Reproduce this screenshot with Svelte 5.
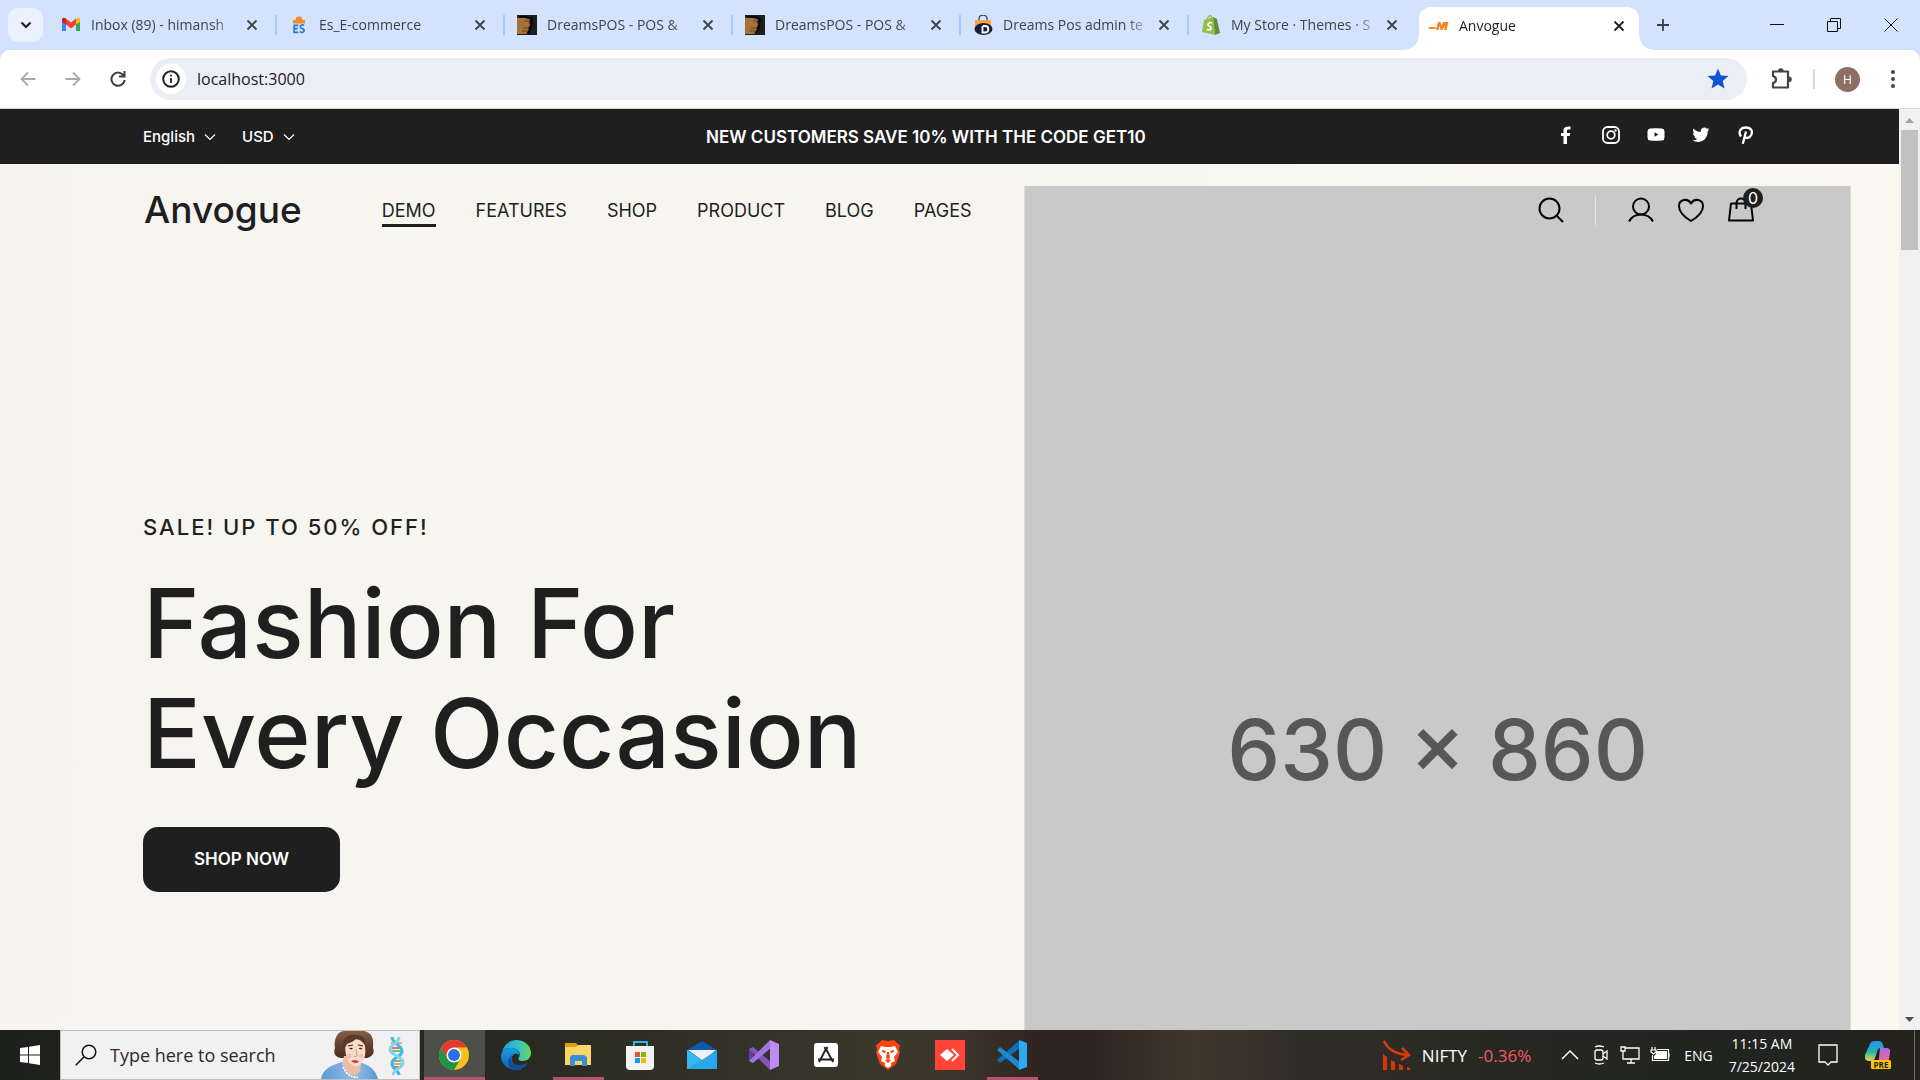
<script>
  const tabs = [
    { title: 'Inbox (89) - himansh', icon: 'gmail' },
    { title: 'Es_E-commerce', icon: 'es' },
    { title: 'DreamsPOS - POS &', icon: 'pos' },
    { title: 'DreamsPOS - POS &', icon: 'pos' },
    { title: 'Dreams Pos admin te', icon: 'dreams' },
    { title: 'My Store · Themes · S', icon: 'shopify' },
    { title: 'Anvogue', icon: 'anvogue', active: true }
  ];
  const nav = ['DEMO', 'FEATURES', 'SHOP', 'PRODUCT', 'BLOG', 'PAGES'];
  const apps = [
    { name: 'Chrome', icon: 'chrome', state: 'current' },
    { name: 'Edge', icon: 'edge' },
    { name: 'File Explorer', icon: 'folder', state: 'open' },
    { name: 'Store', icon: 'store' },
    { name: 'Mail', icon: 'mail' },
    { name: 'Visual Studio', icon: 'vs' },
    { name: 'App', icon: 'compass' },
    { name: 'Brave', icon: 'brave' },
    { name: 'AnyDesk', icon: 'anydesk' },
    { name: 'VS Code', icon: 'code', state: 'stacked' }
  ];
</script>

{#snippet favicon(kind)}
  {#if kind === 'gmail'}
    <svg class="fav" viewBox="0 0 20 20"><path fill="#4285f4" d="M1 6v10h4V9z"/><path fill="#34a853" d="M19 6v10h-4V9z"/><path fill="#c5221f" d="M1 4.500c0-2 2-2.500 4-1v6L1 7z"/><path fill="#fbbc04" d="M19 4.500c0-2-2-2.500-4-1v6l4-2.500z"/><path fill="#ea4335" d="M5 3.500 10 7.500l5-4v6l-5 4-5-4z"/></svg>
  {:else if kind === 'es'}
    <svg class="fav" viewBox="0 0 20 20"><path fill="#f58b2a" d="M4 8.500V5h2.500a3.500 3.500 0 0 1 7 0H16v3.500z"/><path fill="none" stroke="#2878c8" stroke-width="1.700" d="M9.300 10.300H5.200v7h4.100M5.200 13.700h3.500M15 10.500c-1-1-3.800-.8-3.800 1.300 0 2.400 4 1.200 4 3.700 0 2.300-3.400 2.200-4.500 1"/></svg>
  {:else if kind === 'pos'}
    <svg class="fav" viewBox="0 0 20 20"><path fill="#1d1f1d" d="M0 0h20v20H0z"/><path fill="#a9713a" d="M0 3c5-1 9 0 13 1l-1 3 1 3-2 3 1 2-3 4H0z"/><path stroke="#6b431f" d="M5 16h6M6 13h5M8 6h4" fill="none"/><path fill="none" stroke="#070707" stroke-width="2" d="M2 2c5-1 9 0 13 2l-1 9-3 5"/></svg>
  {:else if kind === 'dreams'}
    <svg class="fav" viewBox="0 0 20 20"><path fill="none" stroke="#33435f" stroke-width="1.300" d="M6 6V3.500a4 3.500 0 0 1 8 0V6"/><path fill="#ff9f43" d="M2 5h16v12H2z"/><ellipse cx="10.500" cy="14" rx="9" ry="6" fill="#14213d"/><path fill="none" stroke="#fff" stroke-width="1.800" d="M9.500 11v6.500H12c4.500 0 4.500-6.500 0-6.500h-2"/></svg>
  {:else if kind === 'shopify'}
    <svg class="fav" viewBox="0 0 20 20"><path fill="#95bf47" d="m3 5 9-3 2 18L1 17z"/><path fill="#5e8e3e" d="m12 2 4 2 3 14-5 2z"/><path fill="none" stroke="#95bf47" stroke-width="1.200" d="M6 5c0-3 3-5 4-4s1 2 1 4"/><path fill="none" stroke="#fff" stroke-width="1.800" d="M11 8c-2-1-4 0-4 1.500 0 2 3 1.500 3 3.800 0 2-2.500 2-4 1"/></svg>
  {:else}
    <svg class="fav" viewBox="0 0 20 20"><path fill="#f5811f" d="M0 11h7l-1 2H0zM9 6h2.500l.7 3.500L14.500 6h5l-2 8H15l1.200-4.500-3 4.500h-1.700l-.8-4.500L9.500 14H7z"/></svg>
  {/if}
{/snippet}

{#snippet closeMark()}
  <svg width="12" height="12" viewBox="0 0 12 12"><path d="m1.500 1.500 9 9m0-9-9 9" fill="none" stroke="currentColor" stroke-width="1.800"/></svg>
{/snippet}

{#snippet appIcon(kind)}
  {#if kind === 'chrome'}
    <svg viewBox="0 0 30 30"><circle cx="15" cy="15" r="15" fill="#fbc116"/><path fill="#e33b2e" d="M2 7.500A15 15 0 0 1 28 7.500H15L8 18z"/><path fill="#229342" d="M2 7.500A15 15 0 0 0 15 30l6.500-11.200L8.500 18.800z"/><circle cx="15" cy="15" r="7.500" fill="#fff"/><circle cx="15" cy="15" r="6" fill="#2a6ee8"/></svg>
  {:else if kind === 'edge'}
    <svg viewBox="0 0 30 30"><defs><linearGradient id="edgeTop"><stop stop-color="#249fd8"/><stop offset=".55" stop-color="#35c1c6"/><stop offset="1" stop-color="#66dd55"/></linearGradient><linearGradient id="edgeSide" x2="0" y2="1"><stop stop-color="#1b9de2"/><stop offset="1" stop-color="#0d5fb4"/></linearGradient></defs><path fill="url(#edgeTop)" d="M1 12C3 4 9 0 15 0c9 0 15 6 15 13 0 5-4 8-8 8-3 0-6-1-4-4 3-5-3-9-8-9-4 0-7 1-9 4z"/><path fill="url(#edgeSide)" d="M0 16C1 10 5 8 10 8c5 0 9 3 8 7-4-3-8 0-7 5 1 6 6 9 11 9-11 4-22-3-22-13z"/><path fill="#124e98" d="M11 15c-3 7 2 13 16 8-3 6-11 8-16 6-5-3-5-10 0-14z"/></svg>
  {:else if kind === 'folder'}
    <svg viewBox="0 0 30 30"><path fill="#df9c0b" d="M2 3h11l2 2-2 4H2z"/><path fill="#ffd567" d="M2 7h11l2-2h13v20H2z"/><path fill="#3a8fd2" d="M7 26V17l2-2h12l3 2v9h-5v-5h-7v5z"/></svg>
  {:else if kind === 'store'}
    <svg viewBox="0 0 30 30"><path fill="none" stroke="#2bb4ec" stroke-width="2" d="M9 7V2h13v5"/><path fill="#f3f3f5" d="M1 6h28v20q0 4-4 4H5q-4 0-4-4z"/><path fill="#f25022" d="M10 12h5v5h-5z"/><path fill="#7fba00" d="M16 12h5v5h-5z"/><path fill="#00a4ef" d="M10 18h5v5h-5z"/><path fill="#ffb900" d="M16 18h5v5h-5z"/></svg>
  {:else if kind === 'mail'}
    <svg viewBox="0 0 30 30"><path fill="#0b5ba8" d="m0 10 15-9 15 9-15 10z"/><path fill="#f1f1f3" d="M1 10h28L16 21z"/><path fill="#28a8ea" d="m0 10 15 10 15-10v19H0z"/><path fill="#50d9ff" d="M30 10 0 29V10l15 10z" opacity=".35"/></svg>
  {:else if kind === 'vs'}
    <svg viewBox="0 0 30 30"><path fill="#6a3aa5" d="m0 9 4-2v16l-4-2z"/><path fill="#8552c0" d="m0 9 4-2 19 16-2 7z"/><path fill="#a175df" d="m0 21 4 2L23 7l-2-7z"/><path fill="#bf8bf5" d="m21 0 9 4v22l-9 4z"/></svg>
  {:else if kind === 'compass'}
    <svg viewBox="0 0 30 30"><rect x="3" y="3" width="24" height="24" rx="3" fill="#fff"/><path fill="none" stroke="#222" stroke-width="1.900" d="m15.500 8-7.500 14M14.500 8 22 22M7 19.500h16M13.500 7l1.500 3 1.500-3"/></svg>
  {:else if kind === 'brave'}
    <svg viewBox="0 0 30 30"><path fill="#fb4412" d="m9 0 6 1 6-1 3 3 3 2-1 5 1 3-4 11-8 6-8-6-4-11 1-3-1-5 3-2z"/><path fill="#fff" d="m8 6 4 1h6l4-1 3 6-4 5 1 4-4 2v3l-3 2-3-2v-3l-4-2 1-4-4-5z"/><path fill="#fb4412" d="m9 10 4 1-1 2-3-1zm12 0-4 1 1 2 3-1zM14 12h2l1 6-2 1-2-1zm-2 8 3-1 3 1-3 3z"/></svg>
  {:else if kind === 'anydesk'}
    <svg viewBox="0 0 30 30"><path fill="#ff4438" d="M0 0h30v30H0z"/><path fill="#fff" d="m5 15 7-6 7 6-7 6z"/><path fill="none" stroke="#fff" stroke-width="2" d="m17 9 6 6-6 6"/></svg>
  {:else}
    <svg viewBox="0 0 30 30"><path fill="#0b71b7" d="m0 20 3 3L23 8V0z"/><path fill="#168bd4" d="m0 10 3-3 20 15v8z"/><path fill="#2aabf2" d="m22 0 8 3v24l-8 3z"/></svg>
  {/if}
{/snippet}

<div class="desktop">
  <div class="tabstrip">
    <button class="tabsearch" aria-label="Search tabs"><svg width="12" height="8" viewBox="0 0 12 8"><path d="m1.500 1.500 4.500 4.500 4.500-4.500" fill="none" stroke="#1f1f1f" stroke-width="2.200"/></svg></button>
    {#each tabs as tab}
      <div class="tab" class:active={tab.active}>
        {@render favicon(tab.icon)}
        <span class="title">{tab.title}</span>
        <button class="plain" aria-label="Close tab">{@render closeMark()}</button>
      </div>
    {/each}
    <button class="plain newtab" aria-label="New tab"><svg width="14" height="14" viewBox="0 0 14 14"><path d="M7 1v12M1 7h12" stroke="#3c4043" stroke-width="1.800"/></svg></button>
    <div class="window">
      <button class="plain" aria-label="Minimize"><svg width="14" height="14" viewBox="0 0 14 14"><path d="M0 6.500h14" stroke="#111"/></svg></button>
      <button class="plain" aria-label="Restore"><svg width="14" height="14" viewBox="0 0 14 14"><path d="M.5 3.500h10v10H.5zM3.500 3.500v-3h10v10h-3" fill="none" stroke="#111"/></svg></button>
      <button class="plain" aria-label="Close"><svg width="14" height="14" viewBox="0 0 14 14"><path d="m.5.5 13 13m0-13-13 13" fill="none" stroke="#111"/></svg></button>
    </div>
  </div>

  <div class="toolbar">
    <div class="history">
      <button class="plain" aria-label="Back"><svg width="16" height="16" viewBox="0 0 16 16"><path d="M15.500 8H1.500M8 1.500 1.500 8 8 14.500" fill="none" stroke="#a9a9ab" stroke-width="1.800"/></svg></button>
      <button class="plain" aria-label="Forward"><svg width="16" height="16" viewBox="0 0 16 16"><path d="M.5 8h14M8 1.500 14.500 8 8 14.500" fill="none" stroke="#a9a9ab" stroke-width="1.800"/></svg></button>
      <button class="plain" aria-label="Reload"><svg width="16" height="16" viewBox="0 0 16 16"><path d="M13.500 4.500A6.600 6.600 0 1 0 14.600 9M14.500 0v5.500H9" fill="none" stroke="#3c4043" stroke-width="2"/></svg></button>
    </div>
    <div class="omnibox">
      <span class="info"><svg width="18" height="18" viewBox="0 0 18 18"><circle cx="9" cy="9" r="7.800" fill="none" stroke="#222" stroke-width="2"/><path d="M9 8v5M9 4.800v1.800" stroke="#222" stroke-width="1.800"/></svg></span>
      <input aria-label="Address" value="localhost:3000" />
      <button class="plain" aria-label="Bookmark"><svg width="22" height="22" viewBox="0 0 22 22"><path fill="#0b57d0" d="m11 .5 2.900 7 7.600.6-5.800 4.900 1.800 7.500-6.500-4-6.500 4L6.300 13 .5 8.100l7.600-.6z"/></svg></button>
    </div>
    <button class="plain ext" aria-label="Extensions"><svg width="24" height="24" viewBox="0 0 24 24"><path fill="none" stroke="#444" stroke-width="2.200" stroke-linejoin="round" d="M3 4.500h15v16H3v-4.500c4-1 4-6 0-7z"/><path fill="#444" d="M8 4a2.800 2.800 0 0 1 5.600 0zM19 9.500a2.800 2.800 0 0 1 0 5.600z"/></svg></button>
    <span class="rule"></span>
    <button class="avatar">H</button>
    <button class="plain dots" aria-label="Menu"><svg width="4" height="18" viewBox="0 0 4 18"><g fill="#444"><circle cx="2" cy="2" r="2"/><circle cx="2" cy="9" r="2"/><circle cx="2" cy="16" r="2"/></g></svg></button>
  </div>

  <div class="viewport">
    <main>
      <div class="topbar">
        <div class="locale">
          <button>English <svg width="12" height="8" viewBox="0 0 12 8"><path d="m1 1.500 5 5 5-5" fill="none" stroke="#fff" stroke-width="1.200"/></svg></button>
          <button>USD <svg width="12" height="8" viewBox="0 0 12 8"><path d="m1 1.500 5 5 5-5" fill="none" stroke="#fff" stroke-width="1.200"/></svg></button>
        </div>
        <strong>NEW CUSTOMERS SAVE 10% WITH THE CODE GET10</strong>
        <div class="social">
          <a href="#facebook" aria-label="Facebook"><svg viewBox="0 0 18 18"><path fill="#fff" d="M6.500 18v-8H4V7h2.500V4.500C6.500 1.500 8 .5 13.500.5v3h-2C10 3.500 10 4 10 7h3.300l-.6 3H10v8z"/></svg></a>
          <a href="#instagram" aria-label="Instagram"><svg viewBox="0 0 18 18"><g fill="none" stroke="#fff" stroke-width="1.800"><rect x="1" y="1" width="16" height="16" rx="4.500"/><circle cx="9" cy="9" r="3.800"/></g><circle cx="13.500" cy="4.500" r="1.200" fill="#fff"/></svg></a>
          <a href="#youtube" aria-label="YouTube"><svg viewBox="0 0 18 18"><path fill="#fff" fill-rule="evenodd" d="M3 2.500q6-.6 12 0 2.500.3 2.500 3v6q0 2.700-2.500 3-6 .6-12 0-2.500-.3-2.500-3v-6q0-2.700 2.500-3zM7.500 6.200v4.600l4-2.300z"/></svg></a>
          <a href="#twitter" aria-label="Twitter"><svg viewBox="0 0 18 18"><path fill="#fff" d="M17.500 3.400q-1 .4-2 .5 1-.7 1.500-1.900-1 .6-2.200.8a3.500 3.500 0 0 0-6 3.200Q4.300 5.900 1.500 2.600C.5 4.300 1 6.200 2.600 7.300L1 6.900c0 1.700 1 3 2.800 3.400l-1.500.1c.5 1.300 1.700 2.300 3.300 2.400A7 7 0 0 1 .5 14.300c7 4.200 15.300-.2 15.200-9q1-.7 1.800-1.900z"/></svg></a>
          <a href="#pinterest" aria-label="Pinterest"><svg viewBox="0 0 18 18"><path fill="none" stroke="#fff" stroke-width="2.300" d="M4 10.500C.8 6 3.500 1.500 8.800 1.500c5.500 0 7.200 4 5.400 7.500-1.600 3.300-5 3.700-6.700 1.800M9 5.500 5.800 17.800"/></svg></a>
        </div>
      </div>

      <section class="hero">
        <header>
          <a class="brand" href="#home">Anvogue</a>
          <nav>
            {#each nav as item, i}
              <a href="#{item.toLowerCase()}" class:selected={i === 0}>{item}</a>
            {/each}
          </nav>
          <div class="actions">
            <button class="plain" aria-label="Search"><svg width="26" height="26" viewBox="0 0 26 26"><circle cx="11.500" cy="11.500" r="10" fill="none" stroke="#050505" stroke-width="2"/><path d="m18.500 18.500 6.500 6.500" stroke="#050505" stroke-width="2"/></svg></button>
            <span class="bar"></span>
            <button class="plain" aria-label="Account"><svg width="26" height="26" viewBox="0 0 26 26"><g fill="none" stroke="#050505" stroke-width="2"><circle cx="13" cy="9.500" r="8"/><path d="M1 24.500c5-9.300 19-9.300 24 0"/></g></svg></button>
            <button class="plain" aria-label="Wishlist"><svg width="26" height="26" viewBox="0 0 26 26"><path fill="none" stroke="#050505" stroke-width="2" stroke-linejoin="round" d="M13 24C7 20.500 1 15 1 9c0-6.500 8.500-8.500 12-2.500C16.500.5 25 2.500 25 9c0 6-6 11.500-12 15z"/></svg></button>
            <button class="plain bag" aria-label="Cart"><svg width="26" height="26" viewBox="0 0 26 26"><path fill="none" stroke="#050505" stroke-width="2" stroke-linejoin="round" d="M3 6.500h20L25 23.500H1zM8.500 12V6c0-6 9-6 9 0v6"/></svg><span class="badge">0</span></button>
          </div>
        </header>
        <div class="slide">
          <div class="copy">
            <p>SALE! UP TO 50% OFF!</p>
            <h1>Fashion For<br />Every Occasion</h1>
            <a class="shop" href="#shop-now">SHOP NOW</a>
          </div>
          <div class="photo">630 × 860</div>
        </div>
      </section>
    </main>
    <div class="scroll">
      <svg width="9" height="5" viewBox="0 0 9 5"><path fill="#a3a3a3" d="m0 5 4.500-5L9 5z"/></svg>
      <span class="thumb"></span>
      <svg class="down" width="9" height="5" viewBox="0 0 9 5"><path fill="#505050" d="m0 0 4.500 5L9 0z"/></svg>
    </div>
  </div>

  <footer>
    <button class="start plain" aria-label="Start"><svg width="20" height="20" viewBox="0 0 20 20"><path fill="#fff" d="m0 3 8-1v7.500H0zm9-1.200L20 0v9.500H9zM0 10.500h8V18l-8-1zm9 0h11V20L9 18.200z"/></svg></button>
    <label class="search">
      <svg width="22" height="22" viewBox="0 0 22 22"><circle cx="14" cy="8" r="6.800" fill="none" stroke="#111" stroke-width="1.500"/><path d="m9.200 12.800-8.500 8.500" stroke="#111" stroke-width="1.500"/></svg>
      <input placeholder="Type here to search" />
      <svg class="art" width="90" height="48" viewBox="0 0 90 48">
        <defs>
          <linearGradient id="shirt"><stop stop-color="#5f98d5"/><stop offset=".6" stop-color="#93bfea"/><stop offset="1" stop-color="#5b94d2"/></linearGradient>
          <linearGradient id="hair" x2="0" y2="1"><stop stop-color="#8a624a"/><stop offset=".5" stop-color="#67432f"/><stop offset="1" stop-color="#4a2c1e"/></linearGradient>
        </defs>
        <path fill="url(#shirt)" d="M0 48c1-9 10-14 21-17h18c9 3 16 8 18 17z"/>
        <path fill="url(#hair)" d="M17 3C22-3 45-3 50 4c3 5 2 9 2 13 2 5-1 9-6 10H22c-8 0-10-5-8-10-1-5 0-10 3-14z"/>
        <path fill="#eabfa5" d="M23 25h18l-2 15c-4 7-13 5-18-7z"/>
        <path fill="#f8dbc9" d="M25 11c5-4 13-4 18 0 2 7 2 14-1 19-3 6-8 7-12 3-5-5-7-14-5-22z"/>
        <path fill="#5a3a29" d="M22 15c0-9 6-12 13-11 7 0 10 4 9 10-3-4-6-6-9-6-3 3-7 4-9 5-1 3-2 4-4 2z"/>
        <path fill="none" stroke="#3a241a" stroke-width="1.200" d="m27 15 5-1m5 0 5 1"/>
        <path fill="#2f1d16" d="M28 17.500q2-1.500 4 .2-2 1.300-4-.2zm9.500 0q2-1.500 4 .2-2 1.300-4-.2z"/>
        <path fill="none" stroke="#d59a80" d="m35 18 1 7-3 .5"/>
        <path fill="#c0463f" d="M30 30q4-2 8 .5-4 3.500-8-.5z"/>
        <circle cx="28" cy="25" r="2.500" fill="#f0b3a3" opacity=".7"/><circle cx="40" cy="25" r="2" fill="#f0b3a3" opacity=".7"/>
        <path fill="none" stroke="#fff" stroke-width="1.600" stroke-dasharray="2 1" d="M22 36c3 7 9 11 15 10"/>
        <path stroke="#e89338" stroke-width="1.500" d="M70 12h11M71 33h10"/><path stroke="#d94343" stroke-width="1.500" d="M69 17h10M72 36h8"/><path stroke="#4aab55" stroke-width="1.500" d="M70 20h10M71 30h12"/>
        <path fill="none" stroke="#42b7df" stroke-width="3" d="M71 6c0 7 11 8 10 15-2 7-11 5-10 12 0 5 7 6 7 11"/><path fill="none" stroke="#85d4ee" stroke-width="3" d="M78 6c0 7-9 6-9 13 2 6 13 6 13 13-1 6-9 5-10 12"/>
      </svg>
    </label>
    <div class="apps">
      {#each apps as app}<button class="app {app.state ?? ''}" aria-label={app.name}>{@render appIcon(app.icon)}</button>{/each}
    </div>
    <div class="tray">
      <svg class="chart" width="29" height="32" viewBox="0 0 29 32"><path fill="none" stroke="#dc3b0b" stroke-width="2.500" d="M2 2c4 9 12 13 24 14M20 9l7 7-8 5"/><path fill="#d6380c" d="M1 15l4 3v13H1zM9 21l4 2v8H9zM17 25l4 2v4h-4zM25 28l3 1v2h-3z"/></svg>
      <span class="nifty">NIFTY</span><span class="loss">-0.36%</span>
      <svg class="up" width="18" height="10" viewBox="0 0 18 10"><path fill="none" stroke="#fff" stroke-width="1.500" d="m1 9 8-8 8 8"/></svg>
      <svg class="meet" width="20" height="20" viewBox="0 0 20 20"><g fill="none" stroke="#fff" stroke-width="1.300"><rect x="4" y="5" width="8" height="10" rx="2"/><path d="m12 9 4-3v8l-4-3M4 2q4-2 9 0M4 18q4 2 9 0"/></g></svg>
      <svg class="net" width="20" height="20" viewBox="0 0 20 20"><path fill="none" stroke="#fff" stroke-width="1.300" d="M5 3h14v11H3V7M11 14v4M7 18h8M1 2h4v4H1zM3 6v4"/></svg>
      <svg class="power" width="20" height="20" viewBox="0 0 20 20"><path fill="#fff" d="M6 6h11v8H4v-3l2-2z"/><path fill="none" stroke="#fff" stroke-width="1.200" d="M7 4.500h11.500v11h-16V10M19 8v4M2 2v3M5 2v3M1 5h5v2L3.500 9 1 7z"/></svg>
      <span class="lang">ENG</span>
      <span class="clock">11:15 AM<br />7/25/2024</span>
      <svg class="note" width="20" height="22" viewBox="0 0 20 22"><path fill="none" stroke="#fff" stroke-width="1.300" d="M1 1h18v17h-6l-3 3-3-3H1z"/></svg>
      <svg class="copilot" width="26" height="28" viewBox="0 0 26 28"><defs><linearGradient id="cpA" x2="0" y2="1"><stop stop-color="#2d8cf0"/><stop offset=".5" stop-color="#18b5b8"/><stop offset="1" stop-color="#e8d33f"/></linearGradient><linearGradient id="cpB" x2="0" y2="1"><stop stop-color="#a96bed"/><stop offset="1" stop-color="#f2668b"/></linearGradient></defs><path fill="url(#cpA)" d="M5 3q1-3 5-3h4q3 0 4 4l1 3h-4q-2 0-3 4l-2 6q-1 3-4 3H4q-5 0-4-6z"/><path fill="url(#cpB)" d="M15 7h6q5 0 4 5l-1 6q-1 3-4 3h-9q3-1 3-4z"/><rect x="6" y="19" width="20" height="9" rx="1.500" fill="#ffc400"/><text x="16" y="26.500" text-anchor="middle" font-size="8" font-weight="700" fill="#222">PRE</text></svg>
      <span class="peek"></span>
    </div>
  </footer>
</div>

<style>
  :global(body) { margin: 0; }
  .desktop { height: 100vh; display: flex; flex-direction: column; overflow: hidden; background: #d3e3fd; font-family: "Open Sans", "Noto Sans", sans-serif; }
  button, input { font: inherit; color: inherit; border: 0; background: none; padding: 0; outline: 0; }
  a { color: inherit; text-decoration: none; }
  svg { display: block; flex: none; }
  .plain { display: grid; place-items: center; flex: none; }

  .tabstrip { height: 50px; flex: none; display: flex; align-items: center; padding-left: 8px; color: #3f4347; font-size: 14px; }
  .tabsearch { width: 35px; height: 34px; margin-right: 6px; border-radius: 10px; background: #ebf1fd; display: grid; place-items: center; }
  .tab { width: 228px; height: 20px; box-sizing: border-box; display: flex; align-items: center; gap: 10px; padding: 0 17px 0 12px; border-right: 2px solid #a8c7fa; }
  .tab:nth-child(7) { border-color: transparent; }
  .tab.active { position: relative; align-self: flex-end; width: 220px; height: 43px; margin-left: 2px; padding: 0 14px 6px 10px; border: 0; border-radius: 12px 12px 0 0; background: #fff; color: #1f1f1f; }
  .tab.active::before, .tab.active::after { content: ""; position: absolute; bottom: 0; width: 14px; height: 14px; }
  .tab.active::before { left: -14px; background: radial-gradient(circle at 0 0, transparent 13px, #fff 14px); }
  .tab.active::after { right: -14px; background: radial-gradient(circle at 100% 0, transparent 13px, #fff 14px); }
  .fav { width: 20px; height: 20px; }
  .title { flex: 1; line-height: 24px; white-space: nowrap; mask-image: linear-gradient(to right, #000 84%, transparent 104%); }
  .newtab { margin-left: 17px; }
  .window { margin-left: auto; display: flex; gap: 43px; padding-right: 22px; }

  .toolbar { height: 59px; box-sizing: border-box; flex: none; display: flex; align-items: center; background: #fff; border-radius: 10px 10px 0 0; border-bottom: 1px solid #d8d8d8; padding: 0 25px 0 20px; }
  .history { display: flex; gap: 29px; margin-right: 24px; }
  .omnibox { flex: 1; height: 42px; border-radius: 21px; background: #ebeef7; display: flex; align-items: center; padding: 0 18px 0 6px; color: #202124; font-size: 16px; }
  .info { width: 30px; height: 30px; border-radius: 50%; background: #fff; display: grid; place-items: center; }
  .omnibox input { flex: 1; margin-left: 11px; }
  .ext { margin-left: 23px; }
  .rule { width: 2px; height: 20px; background: #c9dcfb; margin: 0 20px 0 19px; }
  .avatar { width: 25px; height: 25px; border-radius: 50%; background: #8d6e63; color: #fff; font-size: 12px; }
  .dots { margin-left: 31px; }

  .viewport { flex: 1; min-height: 0; display: flex; }
  main { flex: 1; min-width: 0; display: flex; flex-direction: column; font-family: Inter, "Liberation Sans", sans-serif; color: #1f1f1f; }
  .topbar { height: 55px; flex: none; display: flex; align-items: center; justify-content: space-between; padding: 0 144px 0 143px; background: #1f1f1f; color: #fff; }
  .topbar strong { font-size: 17px; font-weight: 600; line-height: 24px; }
  .locale { display: flex; gap: 26px; }
  .locale button { display: flex; align-items: center; gap: 9px; font-size: 15px; line-height: 20px; font-weight: 500; }
  .social { display: flex; gap: 27px; padding-bottom: 4px; }
  .social svg { width: 18px; height: 18px; }

  .hero { flex: 1; min-height: 0; display: grid; background: linear-gradient(90deg, #f7f4ef, #f6f5f0 20%, #f7f5f0 50%, #fbf8f1); }
  header, .slide { grid-area: 1 / 1; min-height: 0; }
  header { z-index: 1; align-self: start; height: 92px; display: flex; align-items: center; padding: 0 145px 0 144px; }
  .brand { font-size: 37px; font-weight: 500; line-height: 44px; }
  nav { display: flex; gap: 40px; margin-left: 80px; font-size: 18px; font-weight: 400; }
  nav a { padding: 4px 0 2px; border-bottom: 3px solid transparent; line-height: 22px; margin-top: 2px; }
  nav .selected { border-color: #1f1f1f; }
  .actions { margin-left: auto; display: flex; align-items: center; gap: 24px; }
  .bar { width: 1px; height: 30px; margin: 0 8px 0 7px; background: #e6e6e6; }
  .bag { position: relative; }
  .badge { position: absolute; top: -9px; right: -9px; width: 20px; height: 20px; border-radius: 50%; background: #1f1f1f; color: #fff; font-size: 16px; line-height: 20px; text-align: center; }
  .slide { display: flex; justify-content: space-between; padding: 22px 48px 0 143px; }
  .copy { padding-top: 326px; }
  .copy p { margin: 0 0 26px; font-size: 22px; line-height: 30px; font-weight: 500; letter-spacing: 2px; }
  h1 { margin: 0; font-size: 96px; line-height: 110px; font-weight: 500; white-space: nowrap; }
  .shop { display: inline-block; margin-top: 39px; padding: 0 51px; border-radius: 15px; background: #1f1f1f; color: #fff; font-size: 17px; font-weight: 600; line-height: 65px; }
  .photo { width: 48.400%; box-sizing: border-box; padding-top: 510px; background: #c9c9c9; color: #575757; text-align: center; font-size: 84px; font-weight: 500; line-height: 108px; border: solid #deddd8; border-width: 0 1px; }

  .scroll { width: 21px; flex: none; background: #f1f1f1; display: flex; flex-direction: column; align-items: center; padding: 9px 0 8px; box-sizing: border-box; }
  .thumb { width: 17px; height: 120px; margin-top: 7px; background: #c1c1c1; }
  .down { margin-top: auto; }

  footer { height: 50px; flex: none; display: flex; background: linear-gradient(90deg, #1d201b, #292a22 27%, #3a382b 46%, #3d352c 50%, #302420 54%, #302421 57%, #40372c 62%, #302d28 68%, #262722 80%, #20241f 90%, #25231e); color: #fff; }
  .start { width: 60px; }
  .search { width: 360px; box-sizing: border-box; display: flex; align-items: center; border: 1px solid #bebebe; background: #f1f1f1; color: #2b2b2b; padding-left: 14px; font-size: 18px; }
  .search input { flex: 1; min-width: 0; margin-left: 13px; }
  .search input::placeholder { color: #2b2b2b; opacity: 1; }
  .art { margin-right: 8px; }
  .apps { display: flex; padding-left: 4px; gap: 1px; }
  .app { width: 61px; display: grid; place-items: center; box-sizing: border-box; border-bottom: 3px solid transparent; padding: 3px 1px 0 0; }
  .app svg { width: 30px; height: 30px; }
  .current { background: #4d4f4a; border-color: #b45271; }
  .open, .stacked { background: linear-gradient(#b45271, #b45271) center bottom / 51px 3px no-repeat border-box; }
  .tray { margin-left: auto; display: flex; align-items: center; font-size: 17px; white-space: nowrap; }
  .nifty { margin-left: 11px; }
  .loss { margin-left: 11px; color: #f65b62; }
  .up { margin-left: 30px; }
  .meet { margin-left: 12px; }
  .net { margin-left: 9px; }
  .power { margin-left: 10px; }
  .lang { margin-left: 14px; font-size: 14px; }
  .clock { margin-left: 16px; font-size: 14px; line-height: 23px; text-align: center; }
  .note { margin-left: 23px; }
  .copilot { margin-left: 27px; }
  .peek { width: 5px; align-self: stretch; margin-left: 23px; border-left: 1px solid #6b6b66; }
</style>
